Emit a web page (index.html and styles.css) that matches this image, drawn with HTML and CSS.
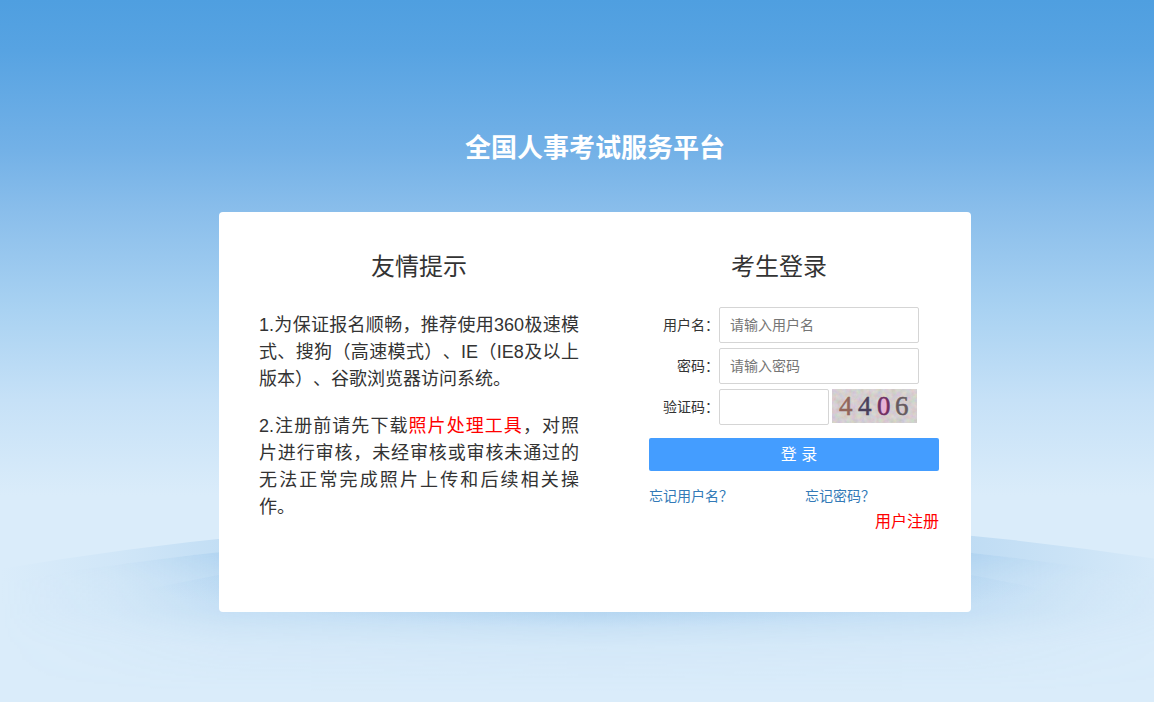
FILE: index.html
```html
<!DOCTYPE html>
<html lang="zh-CN">
<head>
<meta charset="utf-8">
<title>全国人事考试服务平台</title>
<link rel="stylesheet" href="styles.css">
</head>
<body>
<svg class="ripples" viewBox="0 0 1190 200" preserveAspectRatio="none" aria-hidden="true">
  <defs>
    <linearGradient id="band" x1="0" y1="0" x2="1" y2="0">
      <stop offset="0" stop-color="#8ebfe8" stop-opacity="0"/>
      <stop offset="0.1" stop-color="#8ebfe8" stop-opacity="0.13"/>
      <stop offset="0.2" stop-color="#8ebfe8" stop-opacity="0.34"/>
      <stop offset="0.8" stop-color="#8ebfe8" stop-opacity="0.38"/>
      <stop offset="0.9" stop-color="#8ebfe8" stop-opacity="0.2"/>
      <stop offset="1" stop-color="#8ebfe8" stop-opacity="0"/>
    </linearGradient>
    <linearGradient id="pool" gradientUnits="userSpaceOnUse" x1="0" y1="0" x2="1190" y2="0">
      <stop offset="0" stop-color="#7db5e4" stop-opacity="0"/>
      <stop offset="0.09" stop-color="#7db5e4" stop-opacity="0.14"/>
      <stop offset="0.19" stop-color="#7db5e4" stop-opacity="0.44"/>
      <stop offset="0.5" stop-color="#7db5e4" stop-opacity="0.7"/>
      <stop offset="0.81" stop-color="#7db5e4" stop-opacity="0.46"/>
      <stop offset="0.92" stop-color="#7db5e4" stop-opacity="0.16"/>
      <stop offset="1" stop-color="#7db5e4" stop-opacity="0.02"/>
    </linearGradient>
    <linearGradient id="fade" gradientUnits="userSpaceOnUse" x1="0" y1="0" x2="0" y2="200">
      <stop offset="0.26" stop-color="#fff"/>
      <stop offset="0.4" stop-color="#fff" stop-opacity="0.62"/>
      <stop offset="0.56" stop-color="#fff" stop-opacity="0.46"/>
      <stop offset="0.64" stop-color="#fff" stop-opacity="0.25"/>
      <stop offset="0.73" stop-color="#fff" stop-opacity="0.09"/>
      <stop offset="0.85" stop-color="#fff" stop-opacity="0.04"/>
      <stop offset="0.96" stop-color="#fff" stop-opacity="0"/>
    </linearGradient>
    <mask id="depth" maskUnits="userSpaceOnUse" x="0" y="0" width="1190" height="200">
      <rect width="1190" height="200" fill="url(#fade)"/>
    </mask>
    <radialGradient id="core" gradientUnits="userSpaceOnUse" cx="0" cy="0" r="1" gradientTransform="translate(595 62) scale(500 65)">
      <stop offset="0" stop-color="#86bae6" stop-opacity="0.2"/>
      <stop offset="0.75" stop-color="#86bae6" stop-opacity="0.13"/>
      <stop offset="1" stop-color="#86bae6" stop-opacity="0"/>
    </radialGradient>
  </defs>
  <path fill="url(#band)" d="M0 69Q595 -31 1190 64V84Q595 -20 0 83Z"/>
  <path fill="url(#pool)" mask="url(#depth)" d="M0 83Q595 -20 1190 84V200H0Z"/>
  <path fill="url(#core)" d="M85 104Q595 -23 1105 104V200H85Z"/>
</svg>
<main class="page">
  <h1 class="title">全国人事考试服务平台</h1>
  <div class="card">
    <section class="column">
      <h2 class="heading">友情提示</h2>
      <p class="tip">1.为保证报名顺畅，推荐使用360极速模式、搜狗（高速模式）、IE（IE8及以上版本）、谷歌浏览器访问系统。</p>
      <p class="tip">2.注册前请先下载<a class="red" href="#">照片处理工具</a>，对照片进行审核，未经审核或审核未通过的无法正常完成照片上传和后续相关操作。</p>
    </section>
    <section class="column">
      <h2 class="heading">考生登录</h2>
      <form class="login">
        <div class="row">
          <label for="user">用户名：</label>
          <input class="field" id="user" type="text" placeholder="请输入用户名">
        </div>
        <div class="row">
          <label for="password">密码：</label>
          <input class="field" id="password" type="password" placeholder="请输入密码">
        </div>
        <div class="row">
          <label for="code">验证码：</label>
          <input class="field code" id="code" type="text">
          <svg class="captcha" viewBox="0 0 85 34" role="img" aria-label="4406">
            <defs>
              <filter id="grain" x="0" y="0" width="100%" height="100%">
                <feTurbulence type="fractalNoise" baseFrequency="0.2" numOctaves="3" seed="7"/>
                <feColorMatrix values="0.6 0 0 0 0.45  0 0.6 0 0 0.42  0 0 0.6 0 0.42  0 0 0 0 1"/>
              </filter>
            </defs>
            <rect width="85" height="34" fill="#c8c0c2"/>
            <rect width="85" height="34" filter="url(#grain)" opacity="0.5"/>
            <g class="digits">
              <text x="7" y="26" fill="#93655a" stroke="#93655a">4</text>
              <text x="26" y="26" fill="#49405c" stroke="#49405c">4</text>
              <ellipse cx="52" cy="17" rx="5" ry="9" fill="#e6b2d6"/>
              <text x="45" y="26" fill="#702f62" stroke="#702f62">0</text>
              <text x="63" y="26" fill="#665b5f" stroke="#665b5f">6</text>
            </g>
          </svg>
        </div>
        <button class="submit" type="submit">登 录</button>
        <div class="links">
          <a href="#">忘记用户名？</a>
          <a href="#">忘记密码？</a>
        </div>
        <a class="register red" href="#">用户注册</a>
      </form>
    </section>
  </div>
</main>
</body>
</html>
```
FILE: styles.css
```css
* {
  box-sizing: border-box;
}

body {
  position: relative;
  margin: 0;
  min-height: 100vh;
  overflow-x: hidden;
  color: #333;
  background: #daecfa linear-gradient(#4f9fe0 0, #57a3e2 50px, #73b1e7 150px, #8abeeb 212px, #a9d2f2 310px, #c6e1f7 400px, #daecfa 495px) no-repeat;
  font-family: "Liberation Sans", "Noto Sans CJK SC", sans-serif;
  font-size: 14px;
  line-height: 20px;
  text-spacing-trim: space-all;
}

a {
  color: #337ab7;
  text-decoration: none;
}

.red {
  color: #f00;
}

.ripples {
  position: absolute;
  top: 500px;
  left: 0;
  width: calc(100% + 36px);
  height: 200px;
}

.page {
  position: relative;
  display: flex;
  flex-direction: column;
  align-items: center;
  padding: 129px 0 90px 36px;
}

.title {
  margin: 0 0 45px;
  color: #fff;
  font-size: 26px;
  font-weight: 700;
  line-height: 38px;
}

.card {
  display: flex;
  gap: 40px;
  width: 100%;
  max-width: 752px;
  min-height: 400px;
  padding: 40px 32px 40px 40px;
  border-radius: 4px;
  background: #fff;
}

.column {
  flex: 1;
}

.heading {
  margin: 0 0 30px;
  font-size: 24px;
  font-weight: 400;
  line-height: 30px;
  text-align: center;
}

.tip {
  margin: 0 0 20px;
  font-size: 18px;
  line-height: 27px;
  text-align: justify;
}

.login {
  display: flex;
  flex-direction: column;
  margin: -5px 0 0 30px;
}

.row {
  display: flex;
  align-items: center;
  margin-bottom: 5px;
}

.row label {
  width: 70px;
  text-align: right;
}

.field {
  width: 200px;
  height: 36px;
  padding: 0 10px;
  border: 1px solid #d5d5d5;
  border-radius: 2px;
  background: #fff;
  font: inherit;
}

.field::placeholder {
  color: #757575;
}

.code {
  width: 110px;
}

.captcha {
  align-self: flex-start;
  width: 85px;
  height: 34px;
  margin-left: 3px;
}

.digits {
  font-family: "Liberation Serif", serif;
  font-size: 27px;
  stroke-width: 0.5;
}

.submit {
  height: 33px;
  margin-top: 8px;
  padding: 0 0 0 10px;
  border: 0;
  border-radius: 2px;
  color: #fff;
  background: #449dff;
  font: inherit;
  font-size: 16px;
}

.links {
  display: grid;
  grid-template-columns: 156px 1fr;
  margin-top: 15px;
}

.register {
  align-self: flex-end;
  margin-top: 6px;
  font-size: 16px;
}
```
